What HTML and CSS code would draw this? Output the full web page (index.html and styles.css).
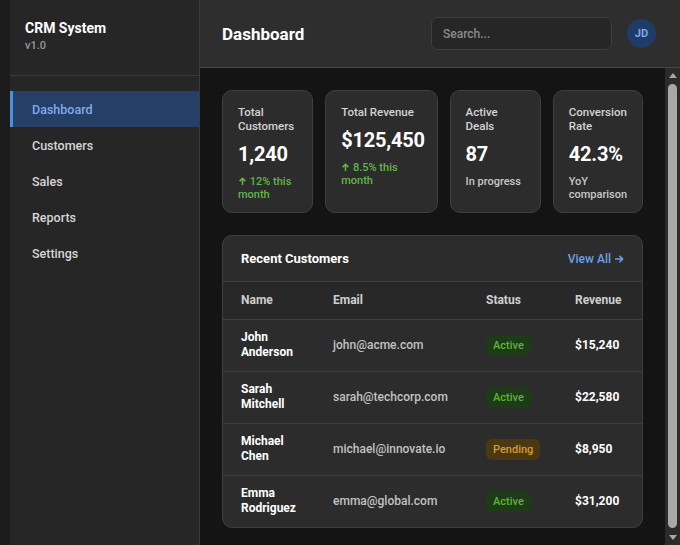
FILE: index.html
```html
<!DOCTYPE html>
<html lang="en">
<head>
    <meta charset="UTF-8">
    <title>CRM System - Dashboard</title>
    <link rel="stylesheet" href="styles.css">
</head>
<body>
    <div class="app">
        <aside class="sidebar">
            <div class="brand">
                <div class="brand-name">CRM System</div>
                <div class="brand-version">v1.0</div>
            </div>
            <nav class="nav">
                <a class="nav-item active" href="#">Dashboard</a>
                <a class="nav-item" href="#">Customers</a>
                <a class="nav-item" href="#">Sales</a>
                <a class="nav-item" href="#">Reports</a>
                <a class="nav-item" href="#">Settings</a>
            </nav>
        </aside>

        <div class="main">
            <header class="topbar">
                <h1 class="page-title">Dashboard</h1>
                <div class="topbar-right">
                    <input class="search" type="text" placeholder="Search...">
                    <div class="avatar">JD</div>
                </div>
            </header>

            <div class="content-wrap">
                <div class="content">
                    <div class="stats">
                        <div class="stat-card">
                            <div class="stat-label">Total Customers</div>
                            <div class="stat-value">1,240</div>
                            <div class="stat-note up"><svg class="up-icon" viewBox="0 0 10 10"><path d="M5 9V1.5M1.8 4.6L5 1.4l3.2 3.2"/></svg> 12% this month</div>
                        </div>
                        <div class="stat-card">
                            <div class="stat-label">Total Revenue</div>
                            <div class="stat-value">$125,450</div>
                            <div class="stat-note up"><svg class="up-icon" viewBox="0 0 10 10"><path d="M5 9V1.5M1.8 4.6L5 1.4l3.2 3.2"/></svg> 8.5% this month</div>
                        </div>
                        <div class="stat-card">
                            <div class="stat-label">Active Deals</div>
                            <div class="stat-value">87</div>
                            <div class="stat-note">In progress</div>
                        </div>
                        <div class="stat-card">
                            <div class="stat-label">Conversion Rate</div>
                            <div class="stat-value">42.3%</div>
                            <div class="stat-note">YoY comparison</div>
                        </div>
                    </div>

                    <div class="panel">
                        <div class="panel-head">
                            <h3>Recent Customers</h3>
                            <a class="view-all" href="#">View All <svg class="arrow-icon" viewBox="0 0 10 10"><path d="M1 5h7.5M5.4 1.8L8.6 5 5.4 8.2"/></svg></a>
                        </div>
                        <table class="customers">
                            <colgroup>
                                <col class="col-name">
                                <col class="col-email">
                                <col class="col-status">
                                <col class="col-revenue">
                            </colgroup>
                            <thead>
                                <tr>
                                    <th>Name</th>
                                    <th>Email</th>
                                    <th>Status</th>
                                    <th>Revenue</th>
                                </tr>
                            </thead>
                            <tbody>
                                <tr>
                                    <td class="name">John Anderson</td>
                                    <td class="email">john@acme.com</td>
                                    <td><span class="badge active">Active</span></td>
                                    <td class="amount">$15,240</td>
                                </tr>
                                <tr>
                                    <td class="name">Sarah Mitchell</td>
                                    <td class="email">sarah@techcorp.com</td>
                                    <td><span class="badge active">Active</span></td>
                                    <td class="amount">$22,580</td>
                                </tr>
                                <tr>
                                    <td class="name">Michael Chen</td>
                                    <td class="email">michael@innovate.io</td>
                                    <td><span class="badge pending">Pending</span></td>
                                    <td class="amount">$8,950</td>
                                </tr>
                                <tr>
                                    <td class="name">Emma Rodriguez</td>
                                    <td class="email">emma@global.com</td>
                                    <td><span class="badge active">Active</span></td>
                                    <td class="amount">$31,200</td>
                                </tr>
                            </tbody>
                        </table>
                    </div>
                </div>

                <div class="scrollbar">
                    <span class="sb-arrow sb-up"></span>
                    <span class="sb-thumb"></span>
                    <span class="sb-arrow sb-down"></span>
                </div>
            </div>
        </div>
    </div>
</body>
</html>
```

FILE: styles.css
```css
* {
    box-sizing: border-box;
}

html, body {
    height: 100%;
}

body {
    margin: 0;
    font-family: Roboto, "Liberation Sans", sans-serif;
    background: #1c1c1c;
    color: #f2f2f2;
}

.app {
    display: flex;
    height: 100vh;
    padding-left: 10px;
}

/* sidebar */
.sidebar {
    width: 190px;
    flex-shrink: 0;
    background: #262626;
    border-right: 1px solid #3a3a3a;
}

.brand {
    padding: 20px 15px 0;
    height: 76px;
    border-bottom: 1px solid #3a3a3a;
}

.brand-name {
    font-size: 14px;
    font-weight: 700;
    color: #fff;
}

.brand-version {
    margin-top: 3px;
    font-size: 11px;
    font-weight: 500;
    color: #9a9a9a;
}

.nav {
    padding-top: 15px;
}

.nav-item {
    display: block;
    height: 36px;
    line-height: 37px;
    padding-left: 19px;
    font-size: 12.5px;
    font-weight: 500;
    color: #d6d6d6;
    text-decoration: none;
    border-left: 3px solid transparent;
}

.nav-item.active {
    background: #263f66;
    border-left-color: #4d8fe0;
    color: #7fabea;
}

/* main */
.main {
    flex: 1;
    display: flex;
    flex-direction: column;
    min-width: 0;
}

.topbar {
    height: 68px;
    flex-shrink: 0;
    background: #2e2e2e;
    border-bottom: 1px solid #454545;
    display: flex;
    align-items: center;
    justify-content: space-between;
    padding: 0 24px 0 22px;
}

.page-title {
    margin: 0;
    font-size: 17px;
    font-weight: 700;
    color: #fff;
}

.topbar-right {
    display: flex;
    align-items: center;
    gap: 15px;
}

.search {
    width: 181px;
    height: 33px;
    padding: 0 11px;
    background: #262626;
    border: 1px solid #3e3e3e;
    border-radius: 7px;
    font-family: inherit;
    font-size: 12px;
    font-weight: 500;
    color: #ddd;
    outline: none;
}

.search::placeholder {
    color: #8a8a8a;
}

.avatar {
    width: 29px;
    height: 29px;
    border-radius: 50%;
    background: #1f3c68;
    color: #7fabea;
    font-size: 11px;
    font-weight: 700;
    display: flex;
    align-items: center;
    justify-content: center;
}

.content-wrap {
    flex: 1;
    min-height: 0;
    display: flex;
    background: #141414;
}

.content {
    flex: 1;
    min-width: 0;
    overflow-y: auto;
    scrollbar-width: none;
    padding: 22px;
}

/* drawn scrollbar track */
.scrollbar {
    width: 15px;
    flex-shrink: 0;
    background: #2b2b2b;
    display: flex;
    flex-direction: column;
    align-items: center;
}

.sb-arrow {
    height: 15px;
    flex-shrink: 0;
    display: flex;
    align-items: center;
    justify-content: center;
}

.sb-arrow::before {
    content: "";
    border-left: 4px solid transparent;
    border-right: 4px solid transparent;
}

.sb-up::before {
    border-bottom: 5px solid #a8a8a8;
}

.sb-down::before {
    border-top: 5px solid #a8a8a8;
}

.sb-thumb {
    flex: 1;
    width: 9px;
    margin: 1px 0 2px;
    border-radius: 5px;
    background: #a8a8a8;
}

/* stat cards */
.stats {
    display: grid;
    grid-template-columns: minmax(0, 91fr) minmax(0, 112fr) minmax(0, 91fr) minmax(0, 90fr);
    gap: 12px;
    margin-bottom: 22px;
}

.stat-card {
    height: 123px;
    background: #2c2c2c;
    border: 1px solid #3f3f3f;
    border-radius: 10px;
    padding: 14px 15px;
}

.stat-label {
    font-size: 11.5px;
    line-height: 14px;
    font-weight: 500;
    color: #d4d4d4;
}

.stat-value {
    margin: 9px 0 9px;
    font-size: 20px;
    line-height: 24px;
    font-weight: 700;
    letter-spacing: -0.2px;
    color: #fff;
    white-space: nowrap;
}

.stat-note {
    font-size: 11px;
    line-height: 13px;
    font-weight: 500;
    color: #c8c8c8;
}

.stat-note.up {
    color: #62b548;
}

.up-icon {
    width: 9px;
    height: 9px;
    fill: none;
    stroke: currentColor;
    stroke-width: 1.7;
    vertical-align: -1px;
}

/* recent customers */
.panel {
    background: #2c2c2c;
    border: 1px solid #3f3f3f;
    border-radius: 10px;
    overflow: hidden;
}

.panel-head {
    height: 46px;
    display: flex;
    align-items: center;
    justify-content: space-between;
    padding: 0 18px;
    border-bottom: 1px solid #3f3f3f;
}

.panel-head h3 {
    margin: 0;
    font-size: 13px;
    font-weight: 700;
    color: #fff;
}

.view-all {
    font-size: 12px;
    font-weight: 500;
    color: #6a9fe6;
    text-decoration: none;
}

.arrow-icon {
    width: 10px;
    height: 10px;
    fill: none;
    stroke: currentColor;
    stroke-width: 1.6;
    vertical-align: -1px;
}

.customers {
    width: 100%;
    border-collapse: collapse;
    table-layout: fixed;
}

.col-name { width: 92px; }
.col-email { width: 153px; }
.col-status { width: 89px; }
.col-revenue { width: 86px; }

.customers th {
    height: 37px;
    background: #282828;
    text-align: left;
    font-size: 12px;
    font-weight: 700;
    color: #cfcfcf;
    padding: 0 0 0 18px;
    border-bottom: 1px solid #3f3f3f;
}

.customers td {
    height: 52px;
    padding: 0 0 0 18px;
    font-size: 12px;
    line-height: 15px;
    border-bottom: 1px solid #3f3f3f;
}

.customers tbody tr:last-child td {
    border-bottom: none;
}

.customers .name {
    font-weight: 700;
    color: #fff;
    padding-right: 18px;
}

.customers .email {
    font-weight: 500;
    color: #c2c2c2;
}

.customers .amount {
    font-weight: 700;
    color: #fff;
}

.badge {
    display: inline-block;
    padding: 3px 7px;
    border-radius: 6px;
    font-size: 11px;
    font-weight: 500;
}

.badge.active {
    background: #1d3b17;
    color: #5db43c;
}

.badge.pending {
    background: #4a3910;
    color: #d49d2e;
}
```
